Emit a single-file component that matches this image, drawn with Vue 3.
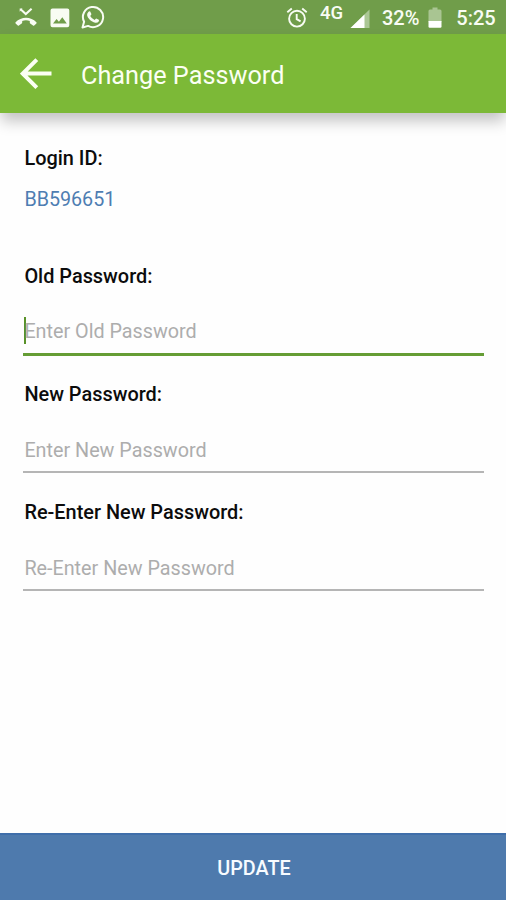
<script setup>
import { ref } from 'vue'

const loginId = 'BB596651'
const fields = ref([
  { id: 'old', label: 'Old Password:', hint: 'Enter Old Password', active: true },
  { id: 'new', label: 'New Password:', hint: 'Enter New Password', active: false },
  { id: 'again', label: 'Re-Enter New Password:', hint: 'Re-Enter New Password', active: false },
])
</script>

<template>
  <div class="screen">
    <div class="status">
      <svg class="missed" viewBox="0 0 22 20" width="22" height="20">
        <path d="M5.600 1.200l5.200 4.900L16.600 .7" fill="none" stroke="#f8fcf3" stroke-width="2" />
        <path d="M4.700 .6h2.800L4.700 3.800z" fill="#f8fcf3" />
        <path d="M.6 14.300C6 8.200 16 8.200 21.400 14.300q.5.600 0 1.100l-2.200 2.200q-.6.500-1.200 0l-2.800-2q-.5-.3-.4-1v-1.700q-3.800-1.100-7.600 0v1.700q0 .7-.5 1l-2.800 2q-.6.500-1.100 0L.6 15.400q-.5-.5 0-1.100z" fill="#f8fcf3" />
      </svg>
      <svg class="photo" viewBox="0 0 20 20" width="20" height="20">
        <path fill-rule="evenodd" d="M2.500.5h14.800q2 0 2 2v14.800q0 2-2 2H2.500q-2 0-2-2V2.500q0-2 2-2zM3 15.600h13.800l-4.500-6.300-3.400 4.500-2.300-2.900z" fill="#f8fcf3" />
      </svg>
      <svg class="chat" viewBox="0 0 24 24" width="24" height="24">
        <path d="M1.500 22.500l1.600-5.700A10.100 10.100 0 1 1 7.100 20.900z" fill="none" stroke="#f8fcf3" stroke-width="2" stroke-linejoin="round" />
        <path d="M7.300 6.900q1-.9 1.900-.5l1.200 2.700q.2.500-1.200 1.900 1.500 2.900 4.500 4 .9-1.500 1.500-1.500l2.600 1.300q.5.300-.1 1.600-1 1.700-3.400 1.400c-4.200-.9-7.700-4.600-8.200-7.700q-.1-1.900 1.200-3.200z" fill="#f8fcf3" />
      </svg>
      <svg class="alarm" viewBox="0 0 22 22" width="22" height="22">
        <g fill="none" stroke="#f8fcf3" stroke-width="1.900">
          <circle cx="11" cy="11.700" r="7.900" />
          <path d="M1.300 5.200l4.500-3.700M20.700 5.200l-4.500-3.700M10.700 7.100v5l3.900 2.300" />
        </g>
      </svg>
      <span class="network">4G</span>
      <svg class="signal" viewBox="0 0 20 20" width="20" height="20">
        <path d="M19.500 .5v18.500H.5z" fill="#abc795" />
        <path d="M14.500 5.400v13.600H.5z" fill="#fff" />
      </svg>
      <span class="percent">32%</span>
      <svg class="battery" viewBox="0 0 14 22" width="14" height="22">
        <path d="M4.500.5h5v2h2.500q1.500 0 1.500 1.500v11H.5V4Q.5 2.500 2 2.500h2.500z" fill="#a9c592" />
        <path d="M.5 14h13v5.500q0 1.200-1.200 1.200H1.700q-1.200 0-1.200-1.200z" fill="#fff" />
      </svg>
      <span class="clock">5:25</span>
    </div>

    <header class="bar">
      <svg class="back" viewBox="0 0 32 32" width="32" height="32">
        <path d="M31.500 15.600H3M16.800 1.600L2.800 15.600l14 14" fill="none" stroke="#fbfff3" stroke-width="4" />
      </svg>
      <h1>Change Password</h1>
    </header>

    <main class="form">
      <section class="login">
        <span class="label">Login ID:</span>
        <span class="value">{{ loginId }}</span>
      </section>
      <section v-for="f in fields" :key="f.id" class="field" :class="{ active: f.active }">
        <span class="label">{{ f.label }}</span>
        <div class="entry">
          <i v-if="f.active" class="caret"></i>
          <span class="hint">{{ f.hint }}</span>
        </div>
      </section>
    </main>

    <button class="update" type="button"><span>UPDATE</span></button>
  </div>
</template>

<style>
body {
  margin: 0;
  background: #fff;
}
</style>

<style scoped>
.screen {
  display: flex;
  flex-direction: column;
  width: 506px;
  height: 900px;
  overflow: hidden;
  background: #fefefe;
  font-family: Roboto, "Liberation Sans", sans-serif;
  color: #0c0c0c;
}
.status {
  display: flex;
  flex: none;
  align-items: flex-start;
  box-sizing: border-box;
  height: 34px;
  padding-left: 15px;
  background: #709d4a;
  color: #f8fcf3;
  font-weight: 500;
  white-space: nowrap;
}
.status svg {
  flex: none;
}
.missed { margin-top: 8px; }
.photo { margin: 8px 0 0 13px; }
.chat { margin: 5px 0 0 11px; }
.alarm { margin: 7px 0 0 181px; }
.network {
  width: 25px;
  margin: 3px 0 0 12px;
  font-size: 18.500px;
  line-height: 20px;
}
.signal { margin: 9px 0 0 5px; }
.percent {
  width: 38px;
  margin: 6px 0 0 12px;
  font-size: 20px;
  line-height: 24px;
}
.battery { margin: 7px 0 0 8px; }
.clock {
  margin: 6px 0 0 14.300px;
  font-size: 20px;
  line-height: 24px;
}
.bar {
  display: flex;
  flex: none;
  align-items: center;
  box-sizing: border-box;
  height: 79px;
  padding-left: 20px;
  background: #7cb937;
  box-shadow: 0 9px 14px -1px rgba(0, 0, 0, 0.24);
}
.back {
  flex: none;
  margin-right: 29px;
}
h1 {
  margin: 4px 0 0;
  color: #fbfff3;
  font-size: 25.250px;
  font-weight: 400;
  line-height: 32px;
}
.form {
  flex: 1;
  padding: 33px 22px 0 24.400px;
}
.login,
.field {
  display: flex;
  flex-direction: column;
  align-items: flex-start;
  height: 118px;
}
.label {
  font-size: 19.900px;
  font-weight: 500;
  line-height: 26px;
}
.value {
  margin-top: 15px;
  color: #4e7db2;
  font-size: 19.700px;
  line-height: 26px;
}
.entry {
  display: flex;
  align-items: center;
  align-self: stretch;
  box-sizing: border-box;
  height: 48px;
  margin: 17px 0 0 -1.400px;
  padding: 6px 0 0 1.400px;
  border-bottom: 2px solid #b5b5b5;
}
.active .entry {
  height: 49px;
  padding-top: 4px;
  border-bottom: 3px solid #659d35;
}
.caret {
  width: 2px;
  height: 27px;
  margin: -4px -2px 0 0;
  background: #599229;
}
.hint {
  color: #adadad;
  font-size: 19.750px;
  line-height: 24px;
}
.update {
  flex: none;
  box-sizing: border-box;
  width: 100%;
  height: 67px;
  padding: 2px 0 0 2px;
  border: 0;
  border-top: 2px solid #3f6eaa;
  background: #4e7aad;
  color: #f7fbff;
  font-family: inherit;
  font-size: 19.800px;
  font-weight: 500;
  line-height: 24px;
}
</style>
